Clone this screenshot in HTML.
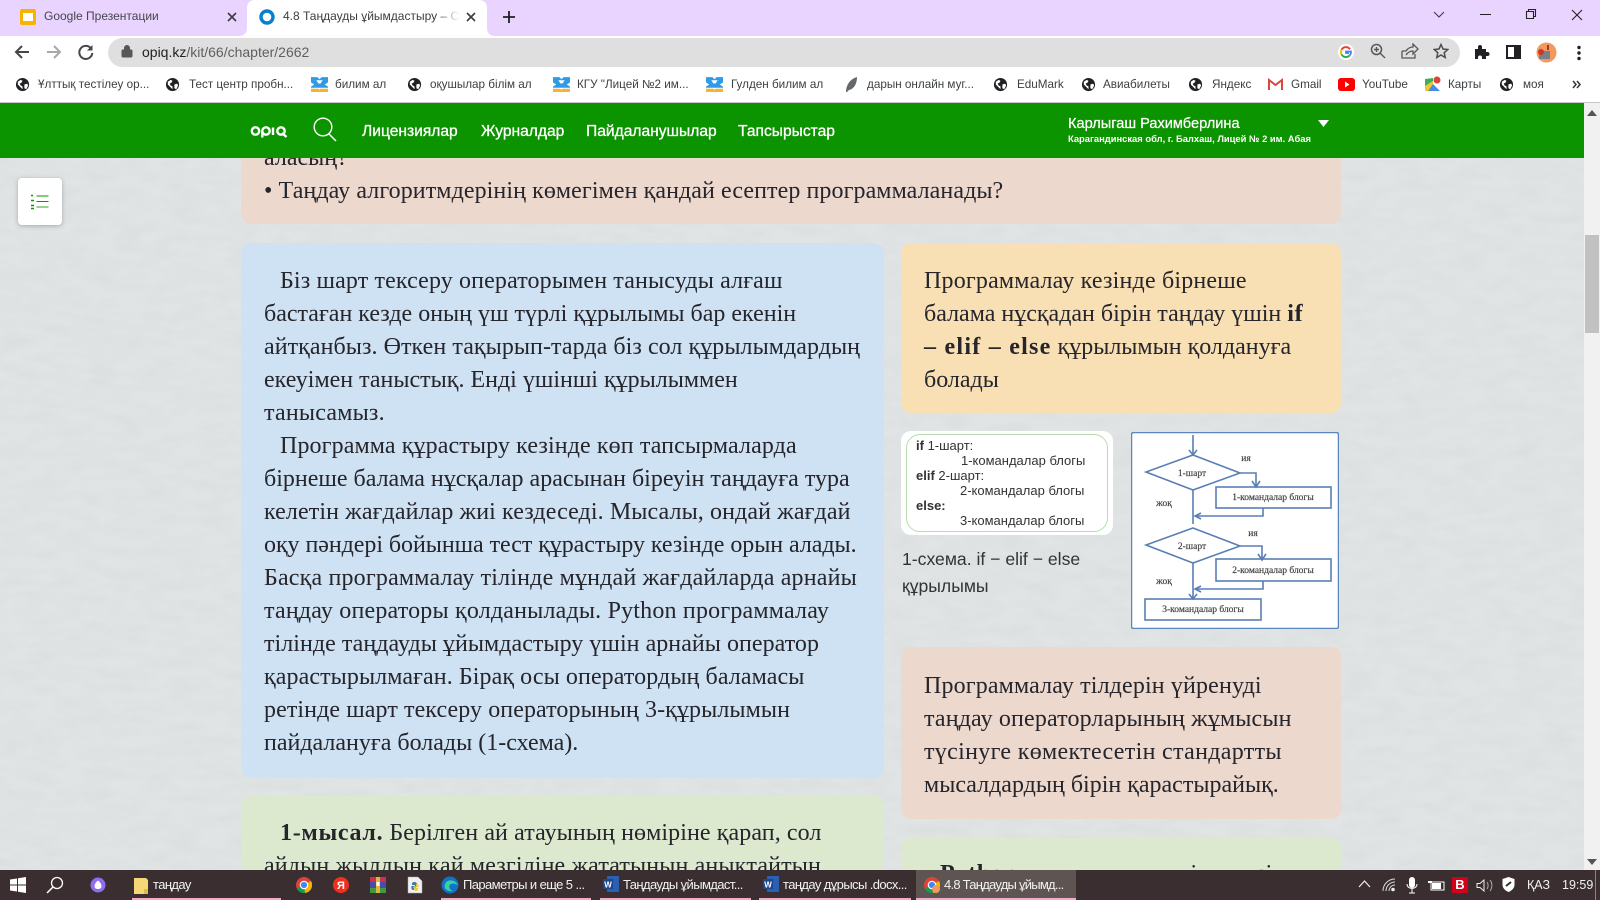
<!DOCTYPE html>
<html lang="kk"><head><meta charset="utf-8"><title>4.8 Таңдауды ұйымдастыру</title>
<style>
html,body{margin:0;padding:0;width:1600px;height:900px;overflow:hidden;background:#e0e4e4;font-family:"Liberation Sans",sans-serif}
*{box-sizing:border-box}
.a{position:absolute;white-space:nowrap}
.card{position:absolute;border-radius:10px}
.l{position:absolute;white-space:nowrap;font-family:"Liberation Serif",serif;font-size:24px;line-height:33px;color:#25252b;height:33px}
.l b{letter-spacing:.7px}
.bm{position:absolute;top:77px;font-size:11.7px;line-height:16px;color:#3c4043;white-space:nowrap}
.ic{position:absolute}
.tb{position:absolute;top:876px;font-size:13px;letter-spacing:-.6px;line-height:18px;color:#f2f2f2;white-space:nowrap}
.ul{position:absolute;top:898px;height:2px;background:#f4a9c4}
.nav{position:absolute;top:123px;font-size:15.6px;line-height:18px;color:#fff;-webkit-text-stroke:.3px #fff;white-space:nowrap}
</style></head>
<body>
<svg width="0" height="0" style="position:absolute">
<defs>
<symbol id="globe" viewBox="0 0 16 16"><circle cx="8" cy="8" r="7" fill="#202124"/><path d="M3 5l3-2 2 1-1 2-2 1 1 2 2 1v3l-2-2-3-3zM10 8l3-1 1 2-2 4-2-1z" fill="#fff"/></symbol>
<symbol id="bil" viewBox="0 0 16 16"><path d="M0 1h6l2 2 2-2h6v5l-3 2 3 2v1H0v-1l3-2-3-2z" fill="#2d9be8"/><path d="M5 4h6L9 7H7z" fill="#fff"/><path d="M0 12h7l1 1 1-1h7v3H0z" fill="#f4b23c"/></symbol>
<filter id="tex" x="0" y="0" width="100%" height="100%"><feTurbulence type="fractalNoise" baseFrequency=".035 .09" numOctaves="3" seed="4"/><feColorMatrix values="0 0 0 0 .55  0 0 0 0 .58  0 0 0 0 .58  .55 .55 0 0 -.42"/></filter>
<linearGradient id="fade"><stop offset="0" stop-color="#fff" stop-opacity="0"/><stop offset="1" stop-color="#fff"/></linearGradient>
</defs>
</svg>

<!-- page background -->
<svg class="ic" style="left:0;top:158px" width="1584" height="712"><rect width="1584" height="712" fill="#e0e4e4"/><rect width="1584" height="712" filter="url(#tex)" opacity=".4"/></svg>

<!-- tab strip -->
<div class="a" style="left:0;top:0;width:1600px;height:36px;background:#e9d4ff"></div>
<svg class="ic" style="left:20px;top:9px" width="16" height="16"><rect width="16" height="16" rx="2" fill="#f6b400"/><rect x="3" y="4" width="10" height="8" fill="#fff"/></svg>
<div class="a" style="left:44px;top:8px;font-size:12px;line-height:17px;color:#45454b">Google Презентации</div>
<svg class="ic" style="left:227px;top:12px" width="10" height="10"><path d="M1 1l8 8M9 1l-8 8" stroke="#3c3c40" stroke-width="1.6"/></svg>
<svg class="ic" style="left:239px;top:0" width="256" height="36"><path d="M0 36c5 0 8-3 8-8V8c0-5 3-8 8-8h224c5 0 8 3 8 8v20c0 5 3 8 8 8z" fill="#fff"/></svg>
<svg class="ic" style="left:259px;top:9px" width="16" height="16"><circle cx="8" cy="8" r="6" fill="none" stroke="#0a7fcb" stroke-width="3.4"/></svg>
<div class="a" style="left:283px;top:8px;font-size:12px;line-height:17px;color:#3c4043;width:176px;overflow:hidden">4.8 Таңдауды ұйымдастыру – Ор</div>
<svg class="ic" style="left:438px;top:8px" width="21" height="20"><rect width="21" height="20" fill="url(#fade)"/></svg>
<svg class="ic" style="left:466px;top:12px" width="10" height="10"><path d="M1 1l8 8M9 1l-8 8" stroke="#3c3c40" stroke-width="1.6"/></svg>
<svg class="ic" style="left:502px;top:10px" width="14" height="14"><path d="M7 1v12M1 7h12" stroke="#202124" stroke-width="1.8"/></svg>
<svg class="ic" style="left:1432px;top:10px" width="14" height="10"><path d="M2 2l5 5 5-5" fill="none" stroke="#3c3c40" stroke-width="1.1"/></svg>
<div class="a" style="left:1480px;top:14px;width:11px;height:1px;background:#222"></div>
<svg class="ic" style="left:1525px;top:8px" width="12" height="12"><path d="M1.5 3.500h7v7h-7zM3.500 3.500v-2h7v7h-2" fill="none" stroke="#222" stroke-width="1.100"/></svg>
<svg class="ic" style="left:1571px;top:9px" width="12" height="12"><path d="M1 1l10 10M11 1L1 11" stroke="#222" stroke-width="1.100"/></svg>

<!-- toolbar -->
<div class="a" style="left:0;top:36px;width:1600px;height:68px;background:#fff"></div>
<svg class="ic" style="left:13px;top:43px" width="18" height="18"><path d="M16 9H3M9 3L3 9l6 6" fill="none" stroke="#45474a" stroke-width="2"/></svg>
<svg class="ic" style="left:45px;top:43px" width="18" height="18"><path d="M2 9h13M9 3l6 6-6 6" fill="none" stroke="#a6a8ab" stroke-width="2"/></svg>
<svg class="ic" style="left:77px;top:43px" width="18" height="18"><path d="M14 5.500A6.500 6.500 0 1 0 15.300 10" fill="none" stroke="#45474a" stroke-width="2"/><path d="M15.500 2v5.500H10z" fill="#45474a"/></svg>
<div class="a" style="left:108px;top:38px;width:1352px;height:29px;border-radius:15px;background:#dfdfdf"></div>
<svg class="ic" style="left:121px;top:44px" width="12" height="14"><path d="M2 6h8a1 1 0 0 1 1 1v5a1 1 0 0 1-1 1H2a1 1 0 0 1-1-1V7a1 1 0 0 1 1-1zM3.500 6V4a2.500 2.500 0 0 1 5 0v2" fill="#55575a" stroke="#55575a"/></svg>
<div class="a" style="left:142px;top:43px;font-size:14px;line-height:18px;color:#5f6063"><span style="color:#202124">opiq.kz</span>/kit/66/chapter/2662</div>
<svg class="ic" style="left:1337px;top:43px" width="18" height="18"><circle cx="9" cy="9" r="8" fill="#fff"/><path d="M13 6.300A5 5 0 0 0 4.500 6.800" fill="none" stroke="#ea4335" stroke-width="2"/><path d="M4.500 6.800a5 5 0 0 0 0 4.500" fill="none" stroke="#fbbc05" stroke-width="2"/><path d="M4.500 11.300a5 5 0 0 0 8 1.300" fill="none" stroke="#34a853" stroke-width="2"/><path d="M12.500 12.600A5 5 0 0 0 14 8.500H9v1.500h3" fill="none" stroke="#4285f4" stroke-width="1.800"/></svg>
<svg class="ic" style="left:1370px;top:43px" width="16" height="16"><circle cx="6.500" cy="6.500" r="5" fill="none" stroke="#55575a" stroke-width="1.500"/><path d="M10.500 10.500L15 15M4 6.500h5M6.500 4v5" stroke="#55575a" stroke-width="1.400"/></svg>
<svg class="ic" style="left:1401px;top:43px" width="18" height="16"><path d="M1 8v7h13v-4M1 8h4c2-3 4-4 7-4V1l5 5-5 5V8c-3 0-5 1-7 4" fill="none" stroke="#55575a" stroke-width="1.300"/></svg>
<svg class="ic" style="left:1433px;top:43px" width="16" height="16"><path d="M8 1.500l2 4.500 4.800.5-3.600 3.200 1 4.800L8 12l-4.200 2.500 1-4.800L1.200 6.500 6 6z" fill="none" stroke="#4a4c4f" stroke-width="1.500"/></svg>
<svg class="ic" style="left:1474px;top:44px" width="16" height="16"><path d="M1 5h3V3a2 2 0 0 1 4 0v2h4v3h1.500a2 2 0 0 1 0 4H12v3H8v-1.500a2 2 0 0 0-4 0V15H1z" fill="#202124"/></svg>
<svg class="ic" style="left:1506px;top:45px" width="15" height="15"><rect x="1" y="1" width="13" height="12" fill="none" stroke="#202124" stroke-width="2"/><rect x="8" y="1" width="6" height="12" fill="#202124"/></svg>
<svg class="ic" style="left:1536px;top:42px" width="21" height="21"><circle cx="10.500" cy="10.500" r="10" fill="#f29a5e"/><rect x="3" y="9" width="11" height="8" fill="#77808c"/><circle cx="5" cy="10" r="3" fill="#c9382a"/><path d="M12 3v5" stroke="#a33" stroke-width="2"/></svg>
<svg class="ic" style="left:1576px;top:45px" width="6" height="16"><circle cx="3" cy="2.500" r="1.700" fill="#202124"/><circle cx="3" cy="8" r="1.700" fill="#202124"/><circle cx="3" cy="13.500" r="1.700" fill="#202124"/></svg>

<!-- bookmarks -->
<svg class="ic" style="left:15px;top:77px" width="15" height="15"><use href="#globe"/></svg><div class="bm" style="left:38px">Ұлттық тестілеу ор...</div>
<svg class="ic" style="left:165px;top:77px" width="15" height="15"><use href="#globe"/></svg><div class="bm" style="left:189px">Тест центр пробн...</div>
<svg class="ic" style="left:311px;top:76px" width="17" height="17"><use href="#bil"/></svg><div class="bm" style="left:335px">билим ал</div>
<svg class="ic" style="left:407px;top:77px" width="15" height="15"><use href="#globe"/></svg><div class="bm" style="left:430px">оқушылар білім ал</div>
<svg class="ic" style="left:553px;top:76px" width="17" height="17"><use href="#bil"/></svg><div class="bm" style="left:577px">КГУ "Лицей №2 им...</div>
<svg class="ic" style="left:706px;top:76px" width="17" height="17"><use href="#bil"/></svg><div class="bm" style="left:731px">Гулден билим ал</div>
<svg class="ic" style="left:844px;top:76px" width="15" height="17"><path d="M2 16c0-7 4-13 11-15 0 7-3 12-8 13l-2 2z" fill="#66696c"/></svg><div class="bm" style="left:867px">дарын онлайн муг...</div>
<svg class="ic" style="left:993px;top:77px" width="15" height="15"><use href="#globe"/></svg><div class="bm" style="left:1017px">EduMark</div>
<svg class="ic" style="left:1081px;top:77px" width="15" height="15"><use href="#globe"/></svg><div class="bm" style="left:1103px">Авиабилеты</div>
<svg class="ic" style="left:1188px;top:77px" width="15" height="15"><use href="#globe"/></svg><div class="bm" style="left:1212px">Яндекс</div>
<svg class="ic" style="left:1268px;top:78px" width="15" height="13"><path d="M1 12V2l6.500 5L14 2v10" fill="none" stroke="#d8483c" stroke-width="2"/></svg><div class="bm" style="left:1291px">Gmail</div>
<svg class="ic" style="left:1338px;top:78px" width="17" height="13"><rect width="17" height="13" rx="3" fill="#f00"/><path d="M7 3.500l4.500 3-4.500 3z" fill="#fff"/></svg><div class="bm" style="left:1362px">YouTube</div>
<svg class="ic" style="left:1425px;top:76px" width="16" height="16"><path d="M0 3l8-1v13H0z" fill="#3dae5a"/><path d="M8 8l7 7H4z" fill="#4a89e8"/><path d="M0 10L8 5v3L3 15H0z" fill="#f6c533"/><circle cx="12" cy="4" r="3.500" fill="#dc4437"/></svg><div class="bm" style="left:1448px">Карты</div>
<svg class="ic" style="left:1499px;top:77px" width="15" height="15"><use href="#globe"/></svg><div class="bm" style="left:1523px">моя</div>
<svg class="ic" style="left:1572px;top:80px" width="10" height="9"><path d="M1 1l3 3.500-3 3.500M5 1l3 3.500-3 3.500" fill="none" stroke="#333" stroke-width="1.500"/></svg>
<div class="a" style="left:0;top:102px;width:1600px;height:1px;background:#c8c8c8"></div>

<!-- cards -->
<div class="card" style="left:241px;top:130px;width:1100px;height:94px;background:#edd8ce"></div>
<div class="l" style="left:264px;top:142px">аласың?</div>
<div class="l" style="left:264px;top:175px;letter-spacing:.08px">• Таңдау алгоритмдерінің көмегімен қандай есептер программаланады?</div>

<div class="card" style="left:241px;top:243px;width:643px;height:535px;background:#cfe2f4"></div>
<div class="l" style="left:280px;top:265px;letter-spacing:.136px">Біз шарт тексеру операторымен танысуды алғаш</div>
<div class="l" style="left:264px;top:298px">бастаған кезде оның үш түрлі құрылымы бар екенін</div>
<div class="l" style="left:264px;top:331px;letter-spacing:.06px">айтқанбыз. Өткен тақырып-тарда біз сол құрылымдардың</div>
<div class="l" style="left:264px;top:364px">екеуімен таныстық. Енді үшінші құрылыммен</div>
<div class="l" style="left:264px;top:397px;letter-spacing:.2px">танысамыз.</div>
<div class="l" style="left:280px;top:430px;letter-spacing:.11px">Программа құрастыру кезінде көп тапсырмаларда</div>
<div class="l" style="left:264px;top:463px">бірнеше балама нұсқалар арасынан біреуін таңдауға тура</div>
<div class="l" style="left:264px;top:496px;letter-spacing:.1px">келетін жағдайлар жиі кездеседі. Мысалы, ондай жағдай</div>
<div class="l" style="left:264px;top:529px;letter-spacing:-.055px">оқу пәндері бойынша тест құрастыру кезінде орын алады.</div>
<div class="l" style="left:264px;top:562px;letter-spacing:.18px">Басқа программалау тілінде мұндай жағдайларда арнайы</div>
<div class="l" style="left:264px;top:595px;letter-spacing:.19px">таңдау операторы қолданылады. Python программалау</div>
<div class="l" style="left:264px;top:628px;letter-spacing:.04px">тілінде таңдауды ұйымдастыру үшін арнайы оператор</div>
<div class="l" style="left:264px;top:661px;letter-spacing:.09px">қарастырылмаған. Бірақ осы оператордың баламасы</div>
<div class="l" style="left:264px;top:694px;letter-spacing:.09px">ретінде шарт тексеру операторының 3-құрылымын</div>
<div class="l" style="left:264px;top:727px">пайдалануға болады (1-схема).</div>

<div class="card" style="left:241px;top:796px;width:643px;height:90px;background:#dde9cf"></div>
<div class="l" style="left:280px;top:817px;letter-spacing:.09px"><b>1-мысал.</b> Берілген ай атауының нөміріне қарап, сол</div>
<div class="l" style="left:264px;top:850px;letter-spacing:.13px">айдың жылдың қай мезгіліне жататынын анықтайтын</div>

<div class="card" style="left:901px;top:243px;width:440px;height:170px;background:#f8dfb4"></div>
<div class="l" style="left:924px;top:265px;letter-spacing:.18px">Программалау кезінде бірнеше</div>
<div class="l" style="left:924px;top:298px;letter-spacing:0">балама нұсқадан бірін таңдау үшін <b>if</b></div>
<div class="l" style="left:924px;top:331px"><b style="letter-spacing:1.25px">– elif – else</b> құрылымын қолдануға</div>
<div class="l" style="left:924px;top:364px">болады</div>

<!-- code image -->
<div class="card" style="left:901px;top:431px;width:212px;height:104px;background:#fff"></div>
<div class="a" style="left:906px;top:434px;width:202px;height:98px;border:1.500px solid #b6dcae;border-radius:14px"></div>
<div class="a" style="left:916px;top:438px;font-size:13px;line-height:15px;color:#333;white-space:pre"><b>if</b> 1-шарт:
<span style="margin-left:45px">1-командалар блогы</span>
<b>elif</b> 2-шарт:
<span style="margin-left:44px">2-командалар блогы</span>
<b>else:</b>
<span style="margin-left:44px">3-командалар блогы</span></div>
<div class="a" style="left:902px;top:546px;font-size:17.6px;line-height:27px;color:#333">1-схема. if − elif − else<br>құрылымы</div>

<!-- flowchart -->
<svg class="ic" style="left:1131px;top:432px" width="208" height="197" viewBox="0 0 208 197">
<rect x=".5" y=".5" width="207" height="196" rx="2" fill="#fff" stroke="#5b86c0" stroke-width="1.500"/>
<g fill="none" stroke="#5a7fb5" stroke-width="1.600">
<path d="M62 3v20M58 18l4 5 4-5"/>
<path d="M62 23l47 18-47 17-47-18z"/>
<path d="M109 41h16v14M121 49l4 6 4-6"/>
<rect x="85" y="55" width="115" height="21"/>
<path d="M62 58v34M132 76v8H64M70 81l-6 3 6 3"/>
<path d="M62 96l47 18-47 17-47-18z"/>
<path d="M109 114h22v14M127 122l4 6 4-6"/>
<rect x="85" y="127" width="115" height="22"/>
<path d="M62 131v36M132 149v8H64M70 154l-6 3 6 3M58 162l4 5 4-5"/>
<rect x="14" y="167" width="116" height="21"/>
</g>
<g font-family="Liberation Serif,serif" font-size="9.5" fill="#444" text-anchor="middle" stroke="#444" stroke-width=".2">
<text x="61" y="44">1-шарт</text><text x="115" y="29">ия</text><text x="142" y="68">1-командалар блогы</text><text x="33" y="74">жоқ</text>
<text x="61" y="117">2-шарт</text><text x="122" y="104">ия</text><text x="142" y="141">2-командалар блогы</text><text x="33" y="152">жоқ</text>
<text x="72" y="180">3-командалар блогы</text>
</g></svg>

<div class="card" style="left:901px;top:647px;width:440px;height:172px;background:#edd8ce"></div>
<div class="l" style="left:924px;top:670px;letter-spacing:.14px">Программалау тілдерін үйренуді</div>
<div class="l" style="left:924px;top:703px;letter-spacing:.14px">таңдау операторларының жұмысын</div>
<div class="l" style="left:924px;top:736px;letter-spacing:.32px">түсінуге көмектесетін стандартты</div>
<div class="l" style="left:924px;top:769px">мысалдардың бірін қарастырайық.</div>

<div class="card" style="left:901px;top:838px;width:440px;height:60px;background:#dde9cf"></div>
<div class="l" style="left:940px;top:858px"><b>Python</b></div>
<div class="l" style="left:1180px;top:858px">ті</div>
<div class="l" style="left:1255px;top:858px">сі</div>

<!-- toc button -->
<div class="a" style="left:18px;top:178px;width:44px;height:47px;background:#fff;border-radius:4px;box-shadow:0 1px 5px rgba(0,0,0,.25)"></div>
<svg class="ic" style="left:30px;top:194px" width="20" height="16"><path d="M1 1.500h2M1 6.500h3M1 11.500h3M1 14.500h3" stroke="#0c9600" stroke-width="1.600"/><path d="M6.500 2h12M6.500 7.500h12" stroke="#0c9600" stroke-width="1"/><path d="M6.500 13h12" stroke="#74c46c" stroke-width="1.500"/></svg>

<!-- header -->
<div class="a" style="left:0;top:103px;width:1584px;height:55px;background:#0c9400"></div>
<svg class="ic" style="left:250px;top:123px" width="40" height="17"><g fill="none" stroke="#fff" stroke-width="2.400"><circle cx="5.500" cy="8" r="3.700"/><circle cx="16" cy="8" r="3.700"/><path d="M12.300 8v6.500M23 4.500v7.500"/><circle cx="31" cy="8" r="3.700"/><path d="M32 10l4.500 4"/></g></svg>
<svg class="ic" style="left:312px;top:117px" width="26" height="25"><circle cx="11" cy="10" r="8.800" fill="none" stroke="#fff" stroke-width="1.400"/><path d="M17 17l7 7" stroke="#fff" stroke-width="1.500"/></svg>
<div class="nav" style="left:362px">Лицензиялар</div>
<div class="nav" style="left:481px">Журналдар</div>
<div class="nav" style="left:586px">Пайдаланушылар</div>
<div class="nav" style="left:738px">Тапсырыстар</div>
<div class="a" style="left:1068px;top:115px;font-size:14.6px;line-height:18px;color:#fff;-webkit-text-stroke:.25px #fff">Карлыгаш Рахимберлина</div>
<div class="a" style="left:1068px;top:132px;font-size:9.4px;line-height:13px;color:#fff;font-weight:bold">Карагандинская обл, г. Балхаш, Лицей № 2 им. Абая</div>
<svg class="ic" style="left:1318px;top:120px" width="11" height="7"><path d="M0 0h11L5.500 7z" fill="#fff"/></svg>

<!-- scrollbar -->
<div class="a" style="left:1584px;top:103px;width:16px;height:767px;background:#f1f1f1"></div>
<svg class="ic" style="left:1587px;top:110px" width="10" height="6"><path d="M0 6h10L5 0z" fill="#555"/></svg>
<div class="a" style="left:1585px;top:235px;width:14px;height:98px;background:#c1c1c1"></div>
<svg class="ic" style="left:1587px;top:859px" width="10" height="6"><path d="M0 0h10L5 6z" fill="#555"/></svg>

<!-- taskbar -->
<div class="a" style="left:0;top:870px;width:1600px;height:30px;background:#3a2e30"></div>
<svg class="ic" style="left:10px;top:877px" width="16" height="16"><path d="M0 2.500l7-1v6H0zM8 1.300l8-1.300v7.500H8zM0 8.500h7v6l-7-1zM8 8.500h8V16l-8-1.200z" fill="#fff"/></svg>
<svg class="ic" style="left:46px;top:876px" width="18" height="18"><circle cx="11" cy="7" r="5.500" fill="none" stroke="#fff" stroke-width="1.300"/><path d="M7 11l-6 6" stroke="#fff" stroke-width="1.500"/></svg>
<svg class="ic" style="left:90px;top:877px" width="16" height="16"><circle cx="8" cy="8" r="7.500" fill="#8f6cf0"/><path d="M8 3.500c2.500 2 3.500 4 3.500 6S9.500 12 8 12s-3.500-.5-3.500-2.500S5.500 5.500 8 3.500z" fill="#fff"/></svg>
<svg class="ic" style="left:134px;top:877px" width="14" height="17"><path d="M0 1h12l2 2v14H0z" fill="#f6d776"/><path d="M10 12h4v5h-4z" fill="#e2b948"/></svg>
<div class="tb" style="left:153px">таңдау</div>
<div class="ul" style="left:132px;width:149px"></div>
<svg class="ic" style="left:296px;top:877px" width="16" height="16"><circle cx="8" cy="8" r="8" fill="#db4437"/><path d="M8 8L1 12a8 8 0 0 0 8 4z" fill="#0f9d58"/><path d="M8 8l7-4a8 8 0 0 1-6 12z" fill="#f4b400"/><circle cx="8" cy="8" r="3.700" fill="#4285f4" stroke="#fff" stroke-width="1.200"/></svg>
<svg class="ic" style="left:333px;top:877px" width="16" height="16"><circle cx="8" cy="8" r="8" fill="#f0301c"/><text x="8" y="12" font-size="11" font-weight="bold" fill="#fff" text-anchor="middle" font-family="Liberation Sans,sans-serif">Я</text></svg>
<svg class="ic" style="left:370px;top:877px" width="16" height="16"><rect width="16" height="5" fill="#c8324e"/><rect y="5" width="16" height="6" fill="#4e4aa8"/><rect y="11" width="16" height="5" fill="#3e9a40"/><rect x="6" y="0" width="4" height="16" fill="#e2b53c"/><path d="M6.500 5h3v4h-3z" fill="#fff"/></svg>
<svg class="ic" style="left:407px;top:876px" width="16" height="18"><path d="M1 1h10l4 4v12H1z" fill="#eef0f3" stroke="#aaa" stroke-width=".5"/><path d="M8 6c-3 0-3 1-3 3h3v1H5c-1 0-1 4 1 4h1v-2l3-1c1 0 1-4-2-5z" fill="#3c78a8"/><path d="M8 15c3 0 3-1 3-3H8v-1h3c1 0 1-3-1-3H9v2l-3 1" fill="#f3c93c"/></svg>
<svg class="ic" style="left:441px;top:876px" width="18" height="18"><circle cx="9" cy="9" r="8.500" fill="#1072c9"/><path d="M4 8c2-5 10-5 13 1-2-1-4-2-7-1-3 1-2 6 2 7-5 1-10-2-8-7z" fill="#39d0a0"/></svg>
<div class="tb" style="left:463px">Параметры и еще 5 ...</div>
<div class="ul" style="left:441px;width:150px"></div>
<svg class="ic" style="left:603px;top:876px" width="16" height="16"><rect x="4" width="12" height="16" fill="#2b5fb3"/><rect x="0" y="3" width="10" height="10" fill="#1c478e"/><text x="5" y="11.500" font-size="8" font-weight="bold" fill="#fff" text-anchor="middle" font-family="Liberation Sans,sans-serif">W</text></svg>
<div class="tb" style="left:623px">Таңдауды ұйымдаст...</div>
<div class="ul" style="left:600px;width:151px"></div>
<svg class="ic" style="left:763px;top:876px" width="16" height="16"><rect x="4" width="12" height="16" fill="#2b5fb3"/><rect x="0" y="3" width="10" height="10" fill="#1c478e"/><text x="5" y="11.500" font-size="8" font-weight="bold" fill="#fff" text-anchor="middle" font-family="Liberation Sans,sans-serif">W</text></svg>
<div class="tb" style="left:783px">таңдау дұрысы .docx...</div>
<div class="ul" style="left:759px;width:152px"></div>
<div class="a" style="left:916px;top:870px;width:160px;height:30px;background:#5e5452"></div>
<svg class="ic" style="left:924px;top:877px" width="16" height="16"><circle cx="8" cy="8" r="8" fill="#db4437"/><path d="M8 8L1 12a8 8 0 0 0 8 4z" fill="#0f9d58"/><path d="M8 8l7-4a8 8 0 0 1-6 12z" fill="#f4b400"/><circle cx="8" cy="8" r="3.700" fill="#4285f4" stroke="#fff" stroke-width="1.200"/><circle cx="12" cy="12" r="4" fill="#f29a5e"/></svg>
<div class="tb" style="left:944px;letter-spacing:-.75px">4.8 Таңдауды ұйымд...</div>
<div class="ul" style="left:916px;width:160px"></div>

<!-- tray -->
<svg class="ic" style="left:1358px;top:880px" width="13" height="8"><path d="M1 7l5.500-6L12 7" fill="none" stroke="#eee" stroke-width="1.200"/></svg>
<svg class="ic" style="left:1382px;top:878px" width="14" height="14"><path d="M1 13A12 12 0 0 1 13 1M4 13a9 9 0 0 1 9-9M7 13a6 6 0 0 1 6-6" fill="none" stroke="#ddd" stroke-width="1"/><circle cx="11" cy="11.500" r="1.800" fill="#eee"/></svg>
<svg class="ic" style="left:1406px;top:877px" width="12" height="17"><rect x="3" width="6" height="11" rx="3" fill="#fff"/><path d="M1 7c0 6 10 6 10 0M6 12v4M3 16h6" fill="none" stroke="#fff"/></svg>
<svg class="ic" style="left:1428px;top:879px" width="17" height="12"><rect x="3" y="3" width="13" height="8" fill="none" stroke="#fff"/><rect x="4" y="4" width="9" height="6" fill="#fff"/><path d="M0 3h4" stroke="#fff" stroke-width="2"/></svg>
<div class="a" style="left:1452px;top:877px;width:16px;height:16px;background:#d4001a;color:#fff;font:bold 13px/16px 'Liberation Sans',sans-serif;text-align:center">B</div>
<svg class="ic" style="left:1476px;top:879px" width="17" height="13"><path d="M1 4.500h3L8 1v11L4 8.500H1z" fill="none" stroke="#eee"/><path d="M11 3c1.500 2 1.500 5 0 7M14 1c2.500 3 2.500 8 0 11" fill="none" stroke="#aaa"/></svg>
<svg class="ic" style="left:1502px;top:877px" width="13" height="15"><path d="M6.500 0l6 2v6c0 3-3 6-6 7-3-1-6-4-6-7V2z" fill="#fff"/><path d="M4 9l5-4" stroke="#333" stroke-width="2"/></svg>
<div class="tb" style="left:1527px;font-size:12.500px;letter-spacing:0">ҚАЗ</div>
<div class="tb" style="left:1562px;font-size:12.500px;letter-spacing:0">19:59</div>
<div class="a" style="left:1595px;top:870px;width:1px;height:30px;background:#888"></div>
</body></html>
